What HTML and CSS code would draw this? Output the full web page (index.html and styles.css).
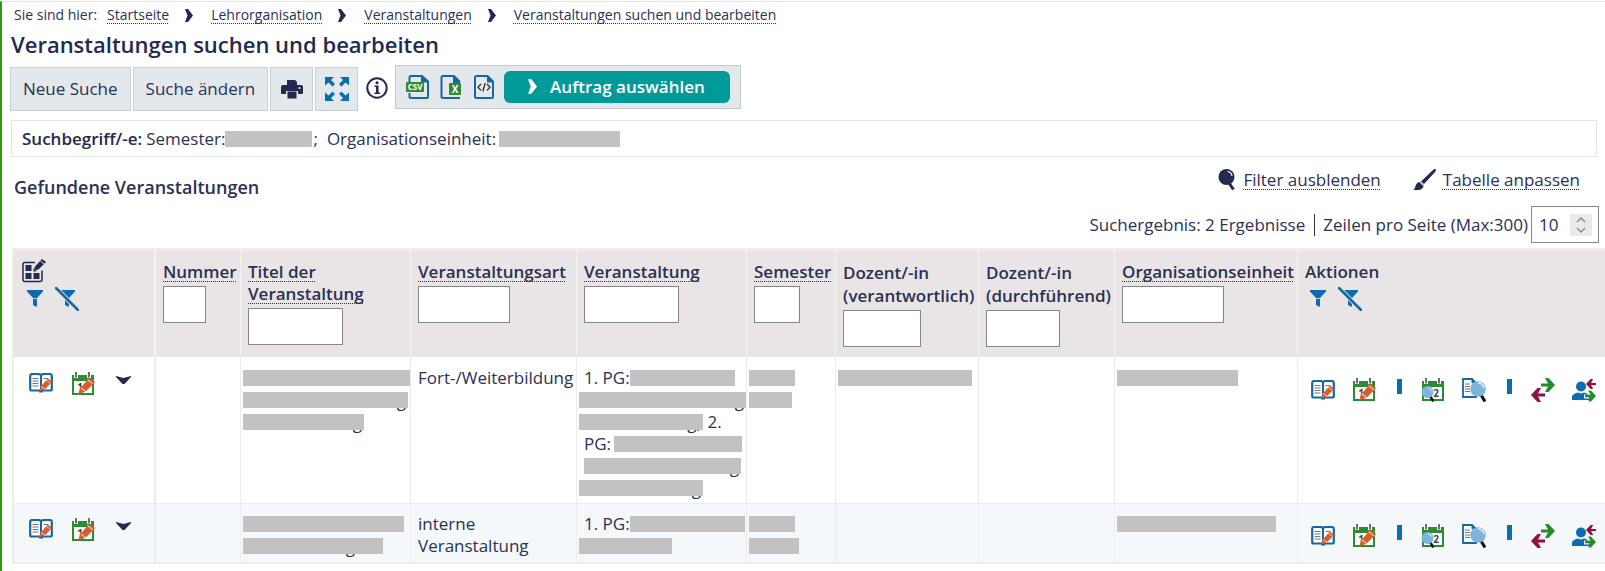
FILE: index.html
```html
<!DOCTYPE html>
<html lang="de">
<head>
<meta charset="utf-8">
<title>Veranstaltungen suchen und bearbeiten</title>
<link rel="stylesheet" href="styles.css">
</head>
<body>
<svg class="sprite" aria-hidden="true">
  <symbol id="i-crumb" viewBox="0 0 8 13"><path d="M0 0h3l5 6.500-5 6.500h-3l2.500-6.500z" fill="currentColor"/></symbol>
  <symbol id="i-print" viewBox="0 0 22 19"><path d="M6 0h8l2 2v4h-10z" fill="#23294f"/><path d="M2 5h18q2 0 2 2v6q0 1-1 1h-4v-3h-12v3h-4q-1 0-1-1v-6q0-2 2-2z" fill="#23294f"/><path d="M6.500 11.500h9v7h-9z" fill="#23294f"/><circle cx="18.500" cy="8" r="1" fill="#fff"/></symbol>
  <symbol id="i-expand" viewBox="0 0 24 24"><g fill="#0b6cb0"><path d="M0 0h9l-3 3 4 4-2.500 2.500-4-4-3.500 3z"/><path d="M24 0h-9l3 3-4 4 2.500 2.500 4-4 3.500 3z"/><path d="M0 24h9l-3-3 4-4-2.500-2.500-4 4-3.500-3z"/><path d="M24 24h-9l3-3-4-4 2.500-2.500 4 4 3.500-3z"/></g></symbol>
  <symbol id="i-info" viewBox="0 0 22 22"><circle cx="11" cy="11" r="9.700" fill="#fff" stroke="#23294f" stroke-width="2"/><path d="M8.500 8.500h4v7h1.500v1.500h-5.500v-1.500h1.500v-5.500h-1.500z" fill="#23294f"/><circle cx="11" cy="5.700" r="1.500" fill="#23294f"/></symbol>
  <symbol id="i-csv" viewBox="0 0 24 24"><path d="M3.500 8v-5.500q0-1.500 1.500-1.500h11l6 5.500v15q0 1.500-1.500 1.500h-15.500q-1.500 0-1.500-1.500v-3.500" fill="#e3e8ec" stroke="#17689f" stroke-width="2"/><path d="M15 0l8 7.500h-8z" fill="#17689f"/><rect y="7" width="18" height="10" rx="1" fill="#2e8b32"/><text x="9" y="15" text-anchor="middle" class="glyph glyph-light glyph-small">CSV</text></symbol>
  <symbol id="i-xls" viewBox="0 0 24 24"><path d="M20 7l-6-6h-11q-1.500 0-1.500 1.500v19q0 1.500 1.500 1.500h17" fill="#e3e8ec" stroke="#17689f" stroke-width="2"/><path d="M13 0l7 7v1.500h-7z" fill="#17689f"/><rect x="9" y="8" width="12" height="12" rx="1" fill="#2e8b32"/><text x="15" y="18" text-anchor="middle" class="glyph glyph-light">X</text></symbol>
  <symbol id="i-xml" viewBox="0 0 20 24"><path d="M1 2.500q0-1.500 1.500-1.500h11l5.500 5.500v15q0 1.500-1.500 1.500h-15q-1.500 0-1.500-1.500z" fill="#e3e8ec" stroke="#17689f" stroke-width="2"/><path d="M13 0l7 7.500h-7z" fill="#17689f"/><path d="M7 9l-3 3.200 3 3.200M13 9l3 3.200-3 3.200M11.200 8l-2.400 8.500" fill="none" stroke="#222" stroke-width="1.200"/></symbol>
  <symbol id="i-lens" viewBox="0 0 18 21"><path d="M11 14l4.500 6.500" stroke="#23294f" stroke-width="3"/><circle cx="8.500" cy="8" r="8" fill="#23294f"/><path d="M9.500 2.500q4 .5 4.500 4.500" fill="none" stroke="#fff" stroke-width="1.200"/></symbol>
  <symbol id="i-brush" viewBox="0 0 23 21"><path d="M22.500 0q1 1-.5 3l-11 12-3-2.500 12-11.500q1.500-1.500 2.500-1z" fill="#23294f"/><path d="M7.500 13l3.500 3q-1 5-6 5h-5q2-1 2.500-4 1-4 5-4z" fill="#23294f"/><path d="M7 13.500l4 3.500" stroke="#fff"/></symbol>
  <symbol id="i-spin" viewBox="0 0 22 22"><rect width="22" height="22" fill="#e9e9ee"/><path d="M7 8l4-4 4 4M7 14l4 4 4-4" fill="none" stroke="#8b8b93" stroke-width="1.500"/></symbol>
  <symbol id="i-grid" viewBox="0 0 24 24"><path d="M13 3.500h-10q-2 0-2 2v15q0 2 2 2h15q2 0 2-2v-9" fill="none" stroke="#23294f" stroke-width="1.500"/><path d="M3.500 6h6v6h-6zM3.500 14h6v6h-6zM11.500 14h6v6h-6zM11.500 9l0 3.500h3z" fill="#23294f"/><path d="M12 11.500l1-4 7-7.500 4 3-7.500 7.500z" fill="#23294f"/><path d="M18.500 2l3.500 3" stroke="#e9e5e6"/></symbol>
  <symbol id="i-filter" viewBox="0 0 24 24"><path d="M4 3h16v1.500l-6 6.500v8.500h-1.500l-2.500-1.500v-7l-6-6.500z" fill="#0b6cb0"/><path d="M9.500 11.500h5" stroke="#e9e5e6" stroke-width=".8"/></symbol>
  <symbol id="i-nofilter" viewBox="0 0 24 24"><path d="M4 3h16v1.500l-6 6.500v8.500h-1.500l-2.500-1.500v-7l-6-6.500z" fill="#0b6cb0"/><path d="M1 1l22 22" stroke="#e9e5e6" stroke-width="4.400"/><path d="M1 1l22 22" stroke="#17689f" stroke-width="2.600" stroke-linecap="round"/></symbol>
  <symbol id="i-pencil" viewBox="0 0 16 16"><path d="M0 16l2-6 8-9q1-1 2 0l3.500 2.500q.5 1 0 1.500l-8.500 8.500z" fill="#dc5a2b"/><path d="M2.500 9.500l5 4M9 2l5 4" stroke="#fff" stroke-width=".9"/></symbol>
  <symbol id="i-book" viewBox="0 0 24 20"><path d="M1.200 3q0-2 2-2h6q2.800 0 2.800 2 0-2 2.800-2h6q2 0 2 2v13q0 1.500-1.500 1.500h-18.600q-1.500 0-1.500-1.500z" fill="#fff" stroke="#17689f" stroke-width="2.200"/><path d="M12 2v17M10 18.500h4" stroke="#17689f" stroke-width="2"/><path d="M3.500 5.500h6M3.500 8h6M3.500 10.500h6M3.500 13h6M14.500 5.500h5" stroke="#777"/><use href="#i-pencil" x="9" y="5.500" width="15" height="13"/></symbol>
  <symbol id="i-calendar" viewBox="0 0 24 24"><path d="M2 5h20v17h-20z" fill="#fff" stroke="#2e8b32" stroke-width="2"/><path d="M1 3h22v6h-22z" fill="#2e8b32"/><path d="M5 0v6M18 0v6" stroke="#fff" stroke-width="4"/><path d="M5 0v5.500M18 0v5.500" stroke="#6d6d6d" stroke-width="2"/></symbol>
  <symbol id="i-caledit" viewBox="0 0 24 24"><use href="#i-calendar"/><text x="9" y="19" text-anchor="middle" class="glyph">1</text><use href="#i-pencil" x="7" y="5" width="17" height="18"/></symbol>
  <symbol id="i-calview" viewBox="0 0 24 24"><use href="#i-calendar"/><text x="15" y="19" text-anchor="middle" class="glyph">2</text><path d="M9 18l3.500 5.500" stroke="#111" stroke-width="2.400"/><circle cx="6.500" cy="14" r="6" fill="#7fb4da"/><path d="M7 10q3 0 4 3" fill="none" stroke="#d9ebf7"/></symbol>
  <symbol id="i-docview" viewBox="0 0 24 24"><path d="M1 1h9l4 4v14h-13z" fill="#fff" stroke="#17689f" stroke-width="1.800"/><path d="M9.500 0l5 5h-5z" fill="#17689f"/><path d="M3 6h5M3 8.500h5M3 11h5M3 13.500h5" stroke="#777"/><path d="M19 17l4 6.500" stroke="#111" stroke-width="3"/><circle cx="16" cy="11" r="7.800" fill="#7fb4da"/><path d="M16 5q5 0 6 5" fill="none" stroke="#e4f1fa" stroke-width="1.500"/></symbol>
  <symbol id="i-right" viewBox="0 0 14 14"><path d="M0 5.500h7l-3-5.500h3.500l6.500 7-6.500 7h-3.500l3-5.500h-7z" fill="#258a2a"/></symbol>
  <symbol id="i-left" viewBox="0 0 14 14"><path d="M14 5.500h-7l3-5.500h-3.500l-6.500 7 6.500 7h3.500l-3-5.500h7z" fill="#93103f"/></symbol>
  <symbol id="i-swap" viewBox="0 0 24 24"><use href="#i-right" x="10" width="14" height="14"/><use href="#i-left" y="10" width="14" height="14"/></symbol>
  <symbol id="i-person" viewBox="0 0 24 24"><circle cx="9" cy="8.500" r="5" fill="#0b6cb0"/><path d="M0 22v-3q0-3 6-4.500l3 1 3-1q6 1.500 6 4.500v3z" fill="#0b6cb0"/><path d="M12 16.500h5v4h-5z" fill="#fff"/><use href="#i-left" x="14" y="0" width="10" height="12"/><use href="#i-right" x="13" y="12" width="11" height="12"/></symbol>
  <symbol id="i-down" viewBox="0 0 15 8"><path d="M0 0l7.500 2 7.500-2v1l-6.500 7h-2l-6.500-7z" fill="#23294f"/></symbol>
</svg>

<main class="page">
  <nav class="crumbs" aria-label="Brotkrumen">
    <span>Sie sind hier:</span>
    <a href="#">Startseite</a><svg class="crumb-sep"><use href="#i-crumb"/></svg>
    <a href="#">Lehrorganisation</a><svg class="crumb-sep"><use href="#i-crumb"/></svg>
    <a href="#">Veranstaltungen</a><svg class="crumb-sep"><use href="#i-crumb"/></svg>
    <a href="#">Veranstaltungen suchen und bearbeiten</a>
  </nav>
  <h1>Veranstaltungen suchen und bearbeiten</h1>

  <div class="toolbar">
    <button class="tool">Neue Suche</button>
    <button class="tool">Suche ändern</button>
    <button class="tool tool-icon" aria-label="Drucken"><svg width="22" height="19"><use href="#i-print"/></svg></button>
    <button class="tool tool-icon" aria-label="Vollbild"><svg width="24" height="24"><use href="#i-expand"/></svg></button>
    <button class="bare info" aria-label="Information"><svg width="22" height="22"><use href="#i-info"/></svg></button>
    <div class="export">
      <button class="bare" aria-label="CSV"><svg width="24" height="24"><use href="#i-csv"/></svg></button>
      <button class="bare" aria-label="Excel"><svg width="24" height="24"><use href="#i-xls"/></svg></button>
      <button class="bare" aria-label="XML"><svg width="20" height="24"><use href="#i-xml"/></svg></button>
      <button class="order"><svg width="9" height="15"><use href="#i-crumb"/></svg>Auftrag auswählen</button>
    </div>
  </div>

  <div class="terms"><b>Suchbegriff/-e:</b><span>Semester:</span><i class="bar w87"></i><span class="semi">;</span><span>Organisationseinheit:</span><i class="bar w121"></i></div>

  <div class="heading">
    <h2>Gefundene Veranstaltungen</h2>
    <div class="links">
      <span><svg width="18" height="21"><use href="#i-lens"/></svg><a href="#">Filter ausblenden</a></span>
      <span><svg width="23" height="21"><use href="#i-brush"/></svg><a href="#">Tabelle anpassen</a></span>
    </div>
  </div>
  <div class="results">
    <span>Suchergebnis: 2 Ergebnisse</span>
    <label for="rows">Zeilen pro Seite (Max:300)</label>
    <span class="number"><input id="rows" type="text" inputmode="numeric" value="10"><svg width="22" height="22"><use href="#i-spin"/></svg></span>
  </div>

  <table>
    <colgroup><col class="c-tools"><col class="c-num"><col class="c-title"><col class="c-kind"><col class="c-event"><col class="c-sem"><col class="c-resp"><col class="c-lead"><col class="c-org"><col></colgroup>
    <thead>
      <tr>
        <th class="tools-head">
          <button class="bare" aria-label="Spalten bearbeiten"><svg width="24" height="24"><use href="#i-grid"/></svg></button>
          <div class="filters"><button class="bare" aria-label="Filtern"><svg width="24" height="24"><use href="#i-filter"/></svg></button><button class="bare" aria-label="Filter entfernen"><svg width="24" height="24"><use href="#i-nofilter"/></svg></button></div>
        </th>
        <th><a href="#">Nummer</a><input class="w43" aria-label="Nummer"></th>
        <th><a href="#">Titel der Veranstaltung</a><input class="w95" aria-label="Titel der Veranstaltung"></th>
        <th><a href="#">Veranstaltungsart</a><input class="w92" aria-label="Veranstaltungsart"></th>
        <th><a href="#">Veranstaltung</a><input class="w95" aria-label="Veranstaltung"></th>
        <th><a href="#">Semester</a><input class="w46" aria-label="Semester"></th>
        <th class="tall"><label for="resp">Dozent/-in (verantwortlich)</label><input id="resp" class="w78"></th>
        <th class="tall"><label for="lead">Dozent/-in (durchführend)</label><input id="lead" class="w74"></th>
        <th><a href="#">Organisationseinheit</a><input class="w102" aria-label="Organisationseinheit"></th>
        <th>Aktionen
          <div class="filters"><button class="bare" aria-label="Filtern"><svg width="24" height="24"><use href="#i-filter"/></svg></button><button class="bare" aria-label="Filter entfernen"><svg width="24" height="24"><use href="#i-nofilter"/></svg></button></div>
        </th>
      </tr>
    </thead>
    <tbody>
      <tr>
        <td><div class="row-tools"><button class="bare" aria-label="Bearbeiten"><svg width="24" height="20"><use href="#i-book"/></svg></button><button class="bare" aria-label="Termine bearbeiten"><svg width="24" height="24"><use href="#i-caledit"/></svg></button><button class="bare" aria-label="Mehr"><svg width="15" height="8"><use href="#i-down"/></svg></button></div></td>
        <td></td>
        <td><div class="line under"><i class="bar w167"></i></div><div class="line under"><i class="bar w165">g</i></div><div class="line under"><i class="bar w121">g</i></div></td>
        <td><div class="line">Fort-/Weiterbildung</div></td>
        <td><div class="line">1. PG:<i class="bar w105"></i></div><div class="line under"><i class="bar w167">g</i></div><div class="line under"><i class="bar w124">g,</i>&nbsp;2.</div><div class="line gap">PG:<i class="bar w128"></i></div><div class="line"><i class="bar w157">g</i></div><div class="line under"><i class="bar w124">g</i></div></td>
        <td><div class="line under"><i class="bar w46"></i></div><div class="line under"><i class="bar w43"></i></div></td>
        <td><div class="line under"><i class="bar w134"></i></div></td>
        <td></td>
        <td><div class="line under"><i class="bar w121"></i></div></td>
        <td><div class="actions"><button class="bare" aria-label="Bearbeiten"><svg width="24" height="20"><use href="#i-book"/></svg></button><button class="bare" aria-label="Termine bearbeiten"><svg width="24" height="24"><use href="#i-caledit"/></svg></button><span class="split"></span><button class="bare" aria-label="Termine ansehen"><svg width="24" height="24"><use href="#i-calview"/></svg></button><button class="bare" aria-label="Details ansehen"><svg width="24" height="24"><use href="#i-docview"/></svg></button><span class="split"></span><button class="bare" aria-label="Tauschen"><svg width="24" height="24"><use href="#i-swap"/></svg></button><button class="bare" aria-label="Teilnehmende"><svg width="24" height="24"><use href="#i-person"/></svg></button></div></td>
      </tr>
      <tr>
        <td><div class="row-tools"><button class="bare" aria-label="Bearbeiten"><svg width="24" height="20"><use href="#i-book"/></svg></button><button class="bare" aria-label="Termine bearbeiten"><svg width="24" height="24"><use href="#i-caledit"/></svg></button><button class="bare" aria-label="Mehr"><svg width="15" height="8"><use href="#i-down"/></svg></button></div></td>
        <td></td>
        <td><div class="line under"><i class="bar w161"></i></div><div class="line under"><i class="bar w140 inner">g</i></div></td>
        <td><div class="line">interne</div><div class="line">Veranstaltung</div></td>
        <td><div class="line">1. PG:<i class="bar w115"></i></div><div class="line under"><i class="bar w93"></i></div></td>
        <td><div class="line under"><i class="bar w46"></i></div><div class="line under"><i class="bar w50"></i></div></td>
        <td></td>
        <td></td>
        <td><div class="line under"><i class="bar w159"></i></div></td>
        <td><div class="actions"><button class="bare" aria-label="Bearbeiten"><svg width="24" height="20"><use href="#i-book"/></svg></button><button class="bare" aria-label="Termine bearbeiten"><svg width="24" height="24"><use href="#i-caledit"/></svg></button><span class="split"></span><button class="bare" aria-label="Termine ansehen"><svg width="24" height="24"><use href="#i-calview"/></svg></button><button class="bare" aria-label="Details ansehen"><svg width="24" height="24"><use href="#i-docview"/></svg></button><span class="split"></span><button class="bare" aria-label="Tauschen"><svg width="24" height="24"><use href="#i-swap"/></svg></button><button class="bare" aria-label="Teilnehmende"><svg width="24" height="24"><use href="#i-person"/></svg></button></div></td>
      </tr>
    </tbody>
  </table>
  <div class="results results-end"><span class="number"><input type="text" aria-label="Zeilen pro Seite"></span></div>
</main>
</body>
</html>
```
FILE: styles.css
```css
* { box-sizing: border-box; }
body {
  margin: 0;
  height: 100vh;
  overflow: hidden;
  padding-top: 1px;
  background: #fff;
  color: #2b3152;
  font: 17px/22px "Open Sans", sans-serif;
}
.sprite { display: none; }
svg { display: block; flex: none; }
.page {
  min-height: 100vh;
  border-top: 1px solid #e3e3e3;
  border-left: 2px solid #36940f;
}
a {
  color: inherit;
  text-decoration: underline dotted 1px;
  text-underline-offset: 3px;
  text-decoration-skip-ink: none;
}
button, input { font: inherit; color: inherit; }
.bare { display: block; padding: 0; border: 0; background: none; }
.glyph { font: bold 10px "Open Sans", sans-serif; fill: #444; }
.glyph-light { fill: #fff; }
.glyph-small { font-size: 8px; }

.crumbs {
  display: flex;
  align-items: center;
  height: 26px;
  padding-left: 12px;
  font-size: 14px;
  line-height: 20px;
}
.crumbs span { margin-right: 10px; }
.crumb-sep { width: 8px; height: 13px; margin: 0 18px 0 16px; color: #23294f; }
h1 { margin: 0 0 0 9px; font-size: 22px; line-height: 32px; font-weight: 600; color: #23294f; }

.toolbar { display: flex; align-items: center; gap: 2px; margin: 2px 0 0 8px; }
.tool { height: 44px; padding: 0 12px; margin-top: 5px; background: #e3e8ec; border: 1px solid #c9ced3; }
.tool-icon { display: flex; align-items: center; justify-content: center; width: 43px; padding: 0; }
.info { margin: 3px 5px 0 6px; }
.export {
  display: flex;
  align-items: center;
  gap: 10px;
  height: 44px;
  padding: 0 10px 0 10px;
  background: #e3e8ec;
  border: 1px solid #c5cad0;
}
.order {
  display: flex;
  align-items: center;
  gap: 13px;
  height: 32px;
  padding: 0 25px 0 24px;
  border: 0;
  border-radius: 6px;
  background: #029a98;
  color: #fff;
  font-weight: 600;
}

.terms {
  display: flex;
  align-items: center;
  height: 37px;
  margin: 9px 8px 0 9px;
  padding: 1px 0 0 10px;
  border: 1px solid #dde5ea;
}
.terms b { margin-right: 4px; font-weight: 600; color: #23294f; }
.terms .semi { margin: 0 9px 0 1px; }
.terms .w121 { margin-left: 3px; }

.heading { display: flex; justify-content: space-between; height: 49px; padding: 12px 25px 0 12px; }
h2 { margin: 6px 0 0; font-size: 18px; line-height: 24px; font-weight: 600; }
.links { display: flex; gap: 32px; }
.links span { display: flex; align-items: flex-start; gap: 7px; }

.results { display: flex; align-items: center; justify-content: flex-end; padding-right: 6px; }
.results label { margin-left: 9px; padding-left: 8px; border-left: 1px solid #2b3152; }
.number { display: flex; align-items: center; width: 68px; height: 37px; margin-left: 3px; padding: 0 6px 0 7px; border: 1px solid #85858a; }
.number input { flex: 1; min-width: 0; padding: 0; border: 0; background: none; }
.results-end { margin-top: 7px; }

table {
  width: calc(100% - 10px);
  margin: 5px 0 0 10px;
  table-layout: fixed;
  border-collapse: separate;
  border-spacing: 0;
  border-left: 2px solid #ededee;
  border-bottom: 2px solid #ededee;
}
.c-tools { width: 142px; }
.c-num { width: 85px; }
.c-title, .c-event { width: 170px; }
.c-kind { width: 166px; }
.c-sem { width: 89px; }
.c-resp { width: 143px; }
.c-lead { width: 136px; }
.c-org { width: 183px; }
th {
  height: 109px;
  padding: 10px 0 0 7px;
  border-top: 3px solid #efedee;
  border-right: 1px solid #f5f3f4;
  background: #e9e5e6;
  font-weight: 600;
  text-align: left;
  vertical-align: top;
}
th a, th label { display: inline-block; vertical-align: top; }
th input { display: block; height: 37px; margin-top: 3px; border: 1px solid #85858a; background: #fff; }
td { padding: 10px 0 4px; border-right: 1px solid #ececee; vertical-align: top; }
th:first-child, td:first-child { border-right-width: 2px; }
th:last-child, td:last-child { border-right: 0; }
th.tall { line-height: 23px; }
th.tools-head { padding: 8px 0 0 8px; }
.filters { display: flex; gap: 8px; margin: 4px 0 0 1px; }
tbody tr + tr { background: #f4f8fb; }
tbody tr + tr td { padding: 9px 0 5px; border-top: 1px solid #ececee; }

.line { display: flex; align-items: center; height: 22px; padding-left: 7px; white-space: nowrap; }
.under { padding-left: 2px; }
.gap { gap: 3px; }
.bar { position: relative; flex: none; height: 16px; line-height: 17px; text-align: right; font-style: normal; padding-right: 2px; }
.bar::after { content: ""; position: absolute; inset: 0; background: #c2c2c2; }
.inner { padding-right: 28px; }

.row-tools { display: flex; padding: 6px 0 0 15px; align-items: flex-start; }
.row-tools button + button { margin-left: 18px; }
.row-tools button:nth-child(2) { margin-top: -1px; }
.row-tools button:last-child { margin: 3px 0 0 21px; }
.actions { display: flex; align-items: center; gap: 17px; padding: 11px 0 0 13px; }
.split { width: 5px; height: 15px; margin: 0 2px 8px 4px; background: #0b6cb0; }

.w43 { width: 43px; }
.w46 { width: 46px; }
.w50 { width: 50px; }
.w74 { width: 74px; }
.w78 { width: 78px; }
.w87 { width: 87px; }
.w92 { width: 92px; }
.w93 { width: 93px; }
.w95 { width: 95px; }
.w102 { width: 102px; }
.w105 { width: 105px; }
.w115 { width: 115px; }
.w121 { width: 121px; }
.w124 { width: 124px; }
.w128 { width: 128px; }
.w134 { width: 134px; }
.w140 { width: 140px; }
.w157 { width: 157px; }
.w159 { width: 159px; }
.w161 { width: 161px; }
.w165 { width: 165px; }
.w167 { width: 167px; }
```
